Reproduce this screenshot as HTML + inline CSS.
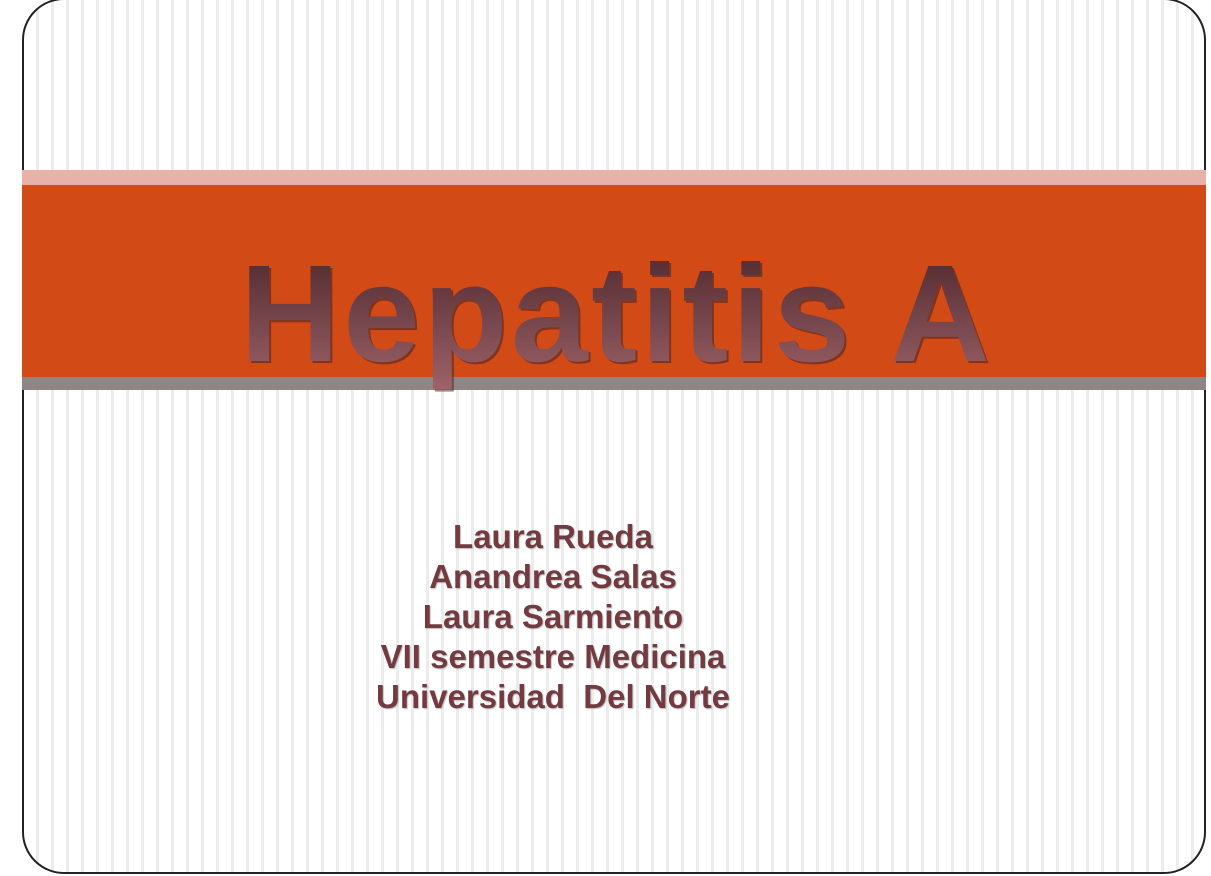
<!DOCTYPE html>
<html><head><meta charset="utf-8"><style>
html,body{margin:0;padding:0;width:1211px;height:876px;background:#fff;overflow:hidden}
.frame{position:absolute;left:22px;top:-2px;width:1184px;height:876px;border:2px solid #222;border-radius:42px;box-sizing:border-box;overflow:hidden;
background:repeating-linear-gradient(90deg,#fff 0,#fff 12px,#ececec 12px,#ececec 15px);}
.pink{position:absolute;left:22px;top:170px;width:1184px;height:15px;background:#e8b1aa}
.orange{position:absolute;left:22px;top:185px;width:1184px;height:192px;background:#d24b17}
.gray{position:absolute;left:22px;top:377px;width:1184px;height:13px;background:#8f8585}
svg{position:absolute;left:0;top:0}
.names{position:absolute;left:0;width:1106px;top:517px;text-align:center;font:bold 33px/40px "Liberation Sans",Arial,sans-serif;color:#733a3f;text-shadow:1px 1px 1px #bbb}
</style></head><body>
<div class="frame"></div>
<div class="pink"></div><div class="orange"></div><div class="gray"></div>
<svg width="1211" height="876">
<defs><linearGradient id="g" x1="0" y1="0" x2="0" y2="1">
<stop offset="0" stop-color="#4a2428"/><stop offset="0.6" stop-color="#7a4a50"/><stop offset="1" stop-color="#a06268"/></linearGradient></defs>
<text x="240" y="361" font-family="Liberation Sans, Arial, sans-serif" font-weight="bold" font-size="138" fill="#3a1a1c" opacity="0.5" textLength="750" lengthAdjust="spacing" transform="translate(2,2)">Hepatitis A</text>
<text x="240" y="361" font-family="Liberation Sans, Arial, sans-serif" font-weight="bold" font-size="138" fill="url(#g)" textLength="750" lengthAdjust="spacing">Hepatitis A</text>
</svg>
<div class="names">Laura Rueda<br>Anandrea Salas<br>Laura Sarmiento<br>VII semestre Medicina<br>Universidad&nbsp; Del Norte</div>
</body></html>
